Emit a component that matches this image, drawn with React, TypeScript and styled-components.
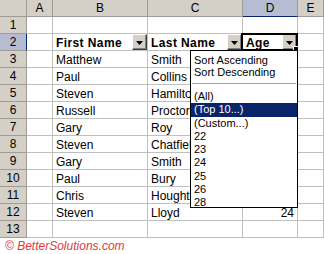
import React from "react";
import styled, { createGlobalStyle } from "styled-components";

const GlobalStyle = createGlobalStyle`
  html, body { margin: 0; padding: 0; background: #ffffff; }
  body { font-family: "Liberation Sans", Arial, sans-serif; }
`;

const Page = styled.div`
  position: relative;
  width: 324px;
  height: 254px;
  overflow: hidden;
  background: #ffffff;
`;

const Sheet = styled.div`
  display: grid;
  grid-template-columns: 27px 26px 95px 95px 55px 26px;
  grid-auto-rows: 17px;
`;

const HeadCell = styled.div<{ $selected?: boolean; $side?: "col" | "row" | "corner" }>`
  box-sizing: border-box;
  display: flex;
  align-items: center;
  justify-content: center;
  background: ${(p) => (p.$selected ? "#b6bdd2" : "#d4d0c8")};
  border-right: 1px solid
    ${(p) => (p.$selected && p.$side === "row" ? "#0a246a" : "#a09c94")};
  border-bottom: 1px solid
    ${(p) => (p.$selected && p.$side === "col" ? "#0a246a" : "#a09c94")};
  font-size: 12px;
  line-height: 13px;
  color: #000;
  padding-top: 1px;
`;

const Cell = styled.div<{ $align?: "left" | "right"; $bold?: boolean }>`
  position: relative;
  box-sizing: border-box;
  display: flex;
  align-items: flex-end;
  justify-content: ${(p) => (p.$align === "right" ? "flex-end" : "flex-start")};
  border-right: 1px solid #c0c0c0;
  border-bottom: 1px solid #c0c0c0;
  padding: 0 3px 0 3px;
  font-size: 12px;
  line-height: 14px;
  font-weight: ${(p) => (p.$bold ? 700 : 400)};
  letter-spacing: ${(p) => (p.$bold ? "0.4px" : "0")};
  white-space: nowrap;
  color: #000;
`;

const FilterCell = styled(Cell)`
  padding-right: 0;
  align-items: stretch;
`;

const FilterText = styled.span`
  flex: 1;
  align-self: flex-end;
  overflow: hidden;
`;

const DropButton = styled.div`
  box-sizing: border-box;
  width: 15px;
  height: 16px;
  flex: none;
  display: flex;
  align-items: center;
  justify-content: center;
  background: #d4d0c8;
  border-top: 1px solid #ffffff;
  border-left: 1px solid #ffffff;
  border-right: 1px solid #404040;
  border-bottom: 1px solid #404040;
  box-shadow: inset -1px -1px 0 #808080;
  padding-top: 2px;
`;

const SelectionFrame = styled.div`
  position: absolute;
  left: -2px;
  top: -1px;
  right: -1px;
  bottom: -1px;
  border: 2px solid #000;
  pointer-events: none;
`;

const FillHandle = styled.div`
  position: absolute;
  right: -3px;
  bottom: -3px;
  width: 4px;
  height: 4px;
  background: #000;
  border: 1px solid #fff;
`;

const Watermark = styled.div`
  padding-left: 5px;
  height: 16px;
  line-height: 16px;
  font-size: 12px;
  font-style: italic;
  color: #e03a3a;
`;

const ListBox = styled.div`
  position: absolute;
  left: 190px;
  top: 50px;
  width: 108px;
  height: 158px;
  box-sizing: border-box;
  border: 1px solid #000;
  background: #ffffff;
  padding-top: 3px;
  overflow: hidden;
  font-size: 11px;
  color: #000;
`;

const SortItem = styled.div`
  height: 12px;
  line-height: 12px;
  padding-left: 3px;
  white-space: nowrap;
`;

const Separator = styled.div`
  margin: 5px 1px 6px 1px;
  height: 1px;
  background: #a0a0a0;
`;

const ValueItem = styled.div<{ $active?: boolean }>`
  height: 13.3px;
  line-height: 13.3px;
  padding-left: 3px;
  white-space: nowrap;
  background: ${(p) => (p.$active ? "#0a246a" : "transparent")};
  color: ${(p) => (p.$active ? "#ffffff" : "#000000")};
`;

const Arrow = () => (
  <svg width="7" height="4" viewBox="0 0 7 4">
    <polygon points="0,0 7,0 3.5,4" fill="#000" />
  </svg>
);

const columns = ["A", "B", "C", "D", "E"];
const people: [string, string, string][] = [
  ["Matthew", "Smith", ""],
  ["Paul", "Collins", ""],
  ["Steven", "Hamilton", ""],
  ["Russell", "Proctor", ""],
  ["Gary", "Roy", ""],
  ["Steven", "Chatfield", ""],
  ["Gary", "Smith", ""],
  ["Paul", "Bury", ""],
  ["Chris", "Houghton", ""],
  ["Steven", "Lloyd", "24"],
];

const values = ["(All)", "(Top 10...)", "(Custom...)", "22", "23", "24", "25", "26", "28"];

export default function App() {
  return (
    <>
      <GlobalStyle />
      <Page>
        <Sheet>
          <HeadCell $side="corner" />
          {columns.map((c) => (
            <HeadCell key={c} $side="col" $selected={c === "D"}>
              {c}
            </HeadCell>
          ))}

          <HeadCell $side="row">1</HeadCell>
          <Cell />
          <Cell />
          <Cell />
          <Cell />
          <Cell />

          <HeadCell $side="row" $selected>
            2
          </HeadCell>
          <Cell />
          <FilterCell $bold>
            <FilterText>First Name</FilterText>
            <DropButton>
              <Arrow />
            </DropButton>
          </FilterCell>
          <FilterCell $bold>
            <FilterText>Last Name</FilterText>
            <DropButton>
              <Arrow />
            </DropButton>
          </FilterCell>
          <FilterCell $bold>
            <FilterText>Age</FilterText>
            <DropButton>
              <Arrow />
            </DropButton>
            <SelectionFrame>
              <FillHandle />
            </SelectionFrame>
          </FilterCell>
          <Cell />

          {people.map(([first, last, age], i) => (
            <React.Fragment key={i}>
              <HeadCell $side="row">{i + 3}</HeadCell>
              <Cell />
              <Cell>{first}</Cell>
              <Cell>{last}</Cell>
              <Cell $align="right">{age}</Cell>
              <Cell />
            </React.Fragment>
          ))}

          <HeadCell $side="row">13</HeadCell>
          <Cell />
          <Cell />
          <Cell />
          <Cell />
          <Cell />
        </Sheet>
        <Watermark>© BetterSolutions.com</Watermark>

        <ListBox>
          <SortItem>Sort Ascending</SortItem>
          <SortItem>Sort Descending</SortItem>
          <Separator />
          {values.map((v) => (
            <ValueItem key={v} $active={v === "(Top 10...)"}>
              {v}
            </ValueItem>
          ))}
        </ListBox>
      </Page>
    </>
  );
}
